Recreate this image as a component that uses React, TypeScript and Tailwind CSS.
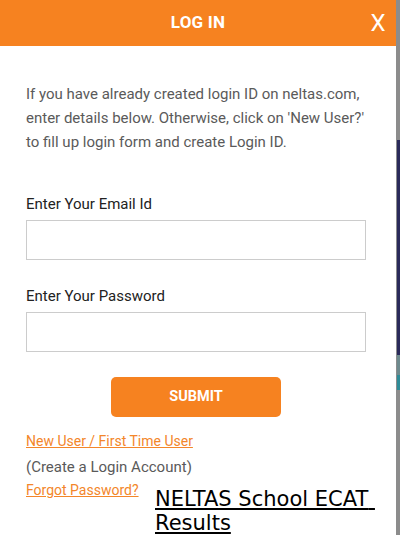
export default function App() {
    return (
        <div className="relative flex h-[535px] w-[400px] overflow-hidden bg-white font-['Roboto',sans-serif]">
            {/* Login modal */}
            <div className="flex w-[396px] flex-col bg-white">
                <div className="flex h-[46px] items-center bg-[#f68220] text-white">
                    <div className="w-[36px]" />
                    <h2 className="flex-1 text-center text-[17px] font-bold tracking-[0.2px]">LOG IN</h2>
                    <div className="w-[36px] text-center text-[24px] leading-none">X</div>
                </div>

                <div className="flex flex-col pl-[26px] pr-[30px] pt-[36px]">
                    <p className="text-[15px] leading-[24px] text-[#5a5a5a]">
                        If you have already created login ID on neltas.com, enter details below. Otherwise, click on 'New User?' to fill up login form and create Login ID.
                    </p>

                    <label className="mt-[38px] text-[15px] leading-[24px] text-[#222]">Enter Your Email Id</label>
                    <input type="text" className="mt-[4px] h-[40px] w-full border border-[#cccccc] outline-none" />

                    <label className="mt-[24px] text-[15px] leading-[24px] text-[#222]">Enter Your Password</label>
                    <input type="password" className="mt-[4px] h-[40px] w-full border border-[#cccccc] outline-none" />

                    <div className="mt-[25px] flex justify-center">
                        <button className="h-[40px] w-[170px] rounded-[5px] bg-[#f68220] text-[14.5px] font-bold text-white">
                            SUBMIT
                        </button>
                    </div>

                    <a className="mt-[12px] text-[14px] leading-[24px] text-[#f3862a] underline">New User / First Time User</a>
                    <p className="mt-[2px] text-[15px] leading-[24px] text-[#5a5a5a]">(Create a Login Account)</p>
                    <a className="text-[14px] leading-[22px] text-[#f3862a] underline">Forgot Password?</a>
                </div>
            </div>

            {/* page behind the modal */}
            <div className="flex w-[4px] flex-col border-l border-[#8c8c8c] bg-[#8c8c8c]">
                <div className="h-[140px]" />
                <div className="h-[215px] bg-[#2a2a5a]" />
                <div className="h-[20px] bg-[#6e8a8e]" />
                <div className="h-[15px] bg-[#2f8c98]" />
                <div className="flex-1" />
            </div>

            <a className="absolute left-[155px] top-[487px] w-[225px] text-[21px] leading-[24px] text-black underline font-['DejaVu_Sans',sans-serif]">
                NELTAS School ECAT{'\u00a0'} Results
            </a>
        </div>
    )
}
